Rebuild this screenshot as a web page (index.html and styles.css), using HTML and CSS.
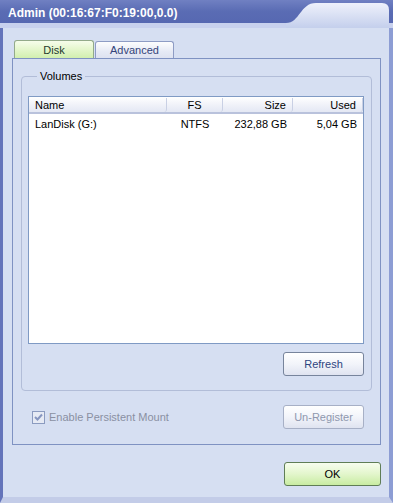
FILE: index.html
```html
<!DOCTYPE html>
<html lang="en">
<head>
    <meta charset="UTF-8">
    <meta name="viewport" content="width=device-width, initial-scale=1.0">
    <title>Admin</title>
    <link rel="stylesheet" href="styles.css">
</head>
<body>
    <div class="window">
        <div class="titlebar">
            <svg class="title-shape" width="393" height="28" viewBox="0 0 393 28">
                <defs>
                    <linearGradient id="lite" x1="0" y1="0" x2="0" y2="1">
                        <stop offset="0" stop-color="#eef1fb"/>
                        <stop offset="1" stop-color="#c4cfec"/>
                    </linearGradient>
                </defs>
                <path d="M286 28 V23 C300 23 300 3 316 3 H382 Q389 3 389 10 V28 Z" fill="url(#lite)"/>
            </svg>
            <span class="title-text">Admin (00:16:67:F0:19:00,0.0)</span>
        </div>
        <div class="client">
            <div class="tabs">
                <div class="tab active">Disk</div>
                <div class="tab">Advanced</div>
            </div>
            <div class="panel">
                <fieldset class="group">
                    <legend>Volumes</legend>
                    <div class="list">
                        <div class="list-head">
                            <div class="col name">Name</div>
                            <div class="col fs">FS</div>
                            <div class="col size">Size</div>
                            <div class="col used">Used</div>
                        </div>
                        <div class="list-row">
                            <div class="col name">LanDisk (G:)</div>
                            <div class="col fs">NTFS</div>
                            <div class="col size">232,88 GB</div>
                            <div class="col used">5,04 GB</div>
                        </div>
                    </div>
                    <div class="group-actions">
                        <button class="button">Refresh</button>
                    </div>
                </fieldset>
                <div class="panel-footer">
                    <label class="check">
                        <span class="box">
                            <svg width="9" height="9" viewBox="0 0 9 9"><path d="M1 4 L3.5 6.5 L8 1.5" fill="none" stroke="#8696c0" stroke-width="2"/></svg>
                        </span>
                        Enable Persistent Mount
                    </label>
                    <button class="button disabled">Un-Register</button>
                </div>
            </div>
            <div class="footer">
                <button class="button ok">OK</button>
            </div>
        </div>
    </div>
</body>
</html>
```

FILE: styles.css
```css
body {
    margin: 0;
    font-family: "Liberation Sans", Arial, sans-serif;
    font-size: 11px;
    background-color: #d6dff2;
}
.window {
    width: 393px;
    height: 503px;
    box-sizing: border-box;
    background-color: #d6dff2;
    border-left: 3px solid #6474ba;
    border-right: 4px solid #8d9dd4;
    border-bottom: 6px solid #c3cce8;
    position: relative;
}
.titlebar {
    position: relative;
    height: 28px;
    margin-left: -3px;
    margin-right: -4px;
    background: linear-gradient(#7080c2, #5a6cb4 40%, #5566b0);
    box-shadow: inset 0 -5px 0 #c8d1ee;
}
.title-shape {
    position: absolute;
    left: 0;
    top: 0;
}
.title-text {
    position: relative;
    display: block;
    padding: 6px 0 0 8px;
    color: #ffffff;
    font-weight: bold;
    font-size: 12px;
    line-height: 14px;
}
.client {
    padding: 12px 8px 0 9px;
}
.tabs {
    display: flex;
    align-items: flex-end;
    padding-left: 2px;
    height: 18px;
}
.tab {
    width: 79px;
    height: 17px;
    box-sizing: border-box;
    text-align: center;
    line-height: 16px;
    color: #34447a;
    border: 1px solid #8e9cc4;
    border-bottom: none;
    border-radius: 3px 3px 0 0;
    background: linear-gradient(#fdfdfe, #e6eaf5 60%, #dde2f0);
    margin-right: 2px;
}
.tab.active {
    width: 80px;
    height: 18px;
    line-height: 18px;
    color: #1f3a2e;
    border-color: #93aa8a;
    background: linear-gradient(#f6fdeb, #e4f6cc 50%, #d2efaf);
    margin-right: 1px;
}
.panel {
    box-sizing: border-box;
    border: 1px solid #7f92c2;
    padding: 11px 8px 0 8px;
    height: 387px;
}
.group {
    margin: 0;
    padding: 13px 7px 14px 6px;
    border: 1px solid #b2bdd8;
    border-radius: 4px;
}
.group legend {
    padding: 0 3px;
    margin-left: 9px;
    line-height: 13px;
    color: #000000;
}
.list {
    height: 246px;
    border: 1px solid #7f9ac4;
    background-color: #ffffff;
}
.list-head {
    display: flex;
    height: 14px;
    line-height: 14px;
    padding-top: 1px;
    background: linear-gradient(#ffffff, #eef0f8 60%, #e4e8f4);
    border-bottom: 2px solid #b9c2dc;
}
.list-head .col {
    border-right: 1px solid #c9d0e4;
    border-radius: 0 0 3px 3px;
}
.list-row {
    display: flex;
    height: 16px;
    line-height: 16px;
    margin-top: 2px;
}
.col {
    box-sizing: border-box;
    white-space: nowrap;
    color: #000000;
}
.col.name {
    width: 138px;
    padding-left: 6px;
}
.col.fs {
    width: 56px;
    text-align: center;
}
.col.size {
    width: 70px;
    text-align: right;
    padding-right: 6px;
}
.col.used {
    width: 70px;
    text-align: right;
    padding-right: 6px;
}
.group-actions {
    display: flex;
    justify-content: flex-end;
    margin-top: 8px;
}
.button {
    width: 81px;
    height: 24px;
    font-family: "Liberation Sans", Arial, sans-serif;
    font-size: 11px;
    color: #2e4480;
    border: 1px solid #77849c;
    border-radius: 3px;
    background: linear-gradient(#ffffff, #f2f4fa 50%, #dfe3f0);
    padding: 0;
}
.button.disabled {
    color: #8f98ae;
    border-color: #a7b0c6;
}
.panel-footer {
    display: flex;
    align-items: center;
    justify-content: space-between;
    padding: 14px 8px 0 11px;
}
.check {
    display: flex;
    align-items: center;
    color: #8a90a2;
}
.box {
    width: 11px;
    height: 11px;
    border: 1px solid #8b9bc0;
    background-color: #e6eaf4;
    margin-right: 4px;
    display: flex;
    align-items: center;
    justify-content: center;
}
.footer {
    display: flex;
    justify-content: flex-end;
    padding-top: 17px;
}
.button.ok {
    width: 97px;
    color: #000000;
    border-color: #5f7d56;
    background: linear-gradient(#f7fdee, #e3f6cc 50%, #c8eca2);
}
```
